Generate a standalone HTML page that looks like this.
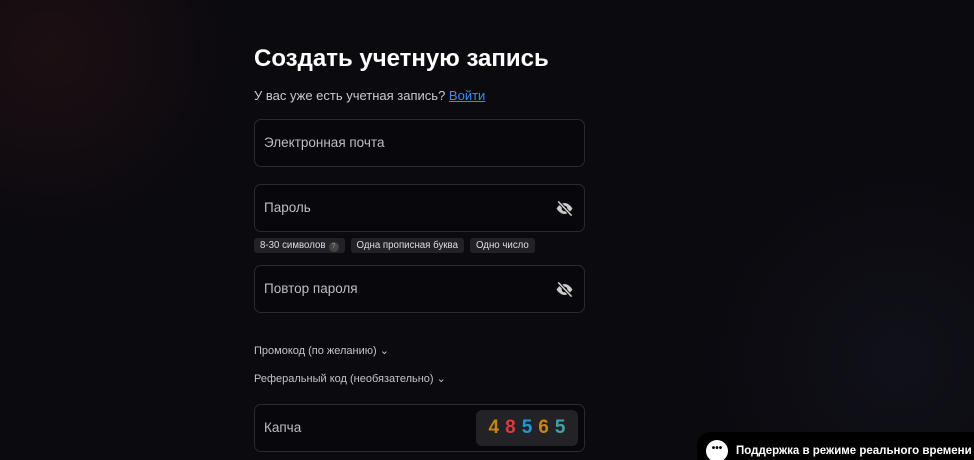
<!DOCTYPE html>
<html><head><meta charset="utf-8"><style>
*{margin:0;padding:0;box-sizing:border-box}
html,body{width:974px;height:460px;overflow:hidden}
body{background:#0b0a0f;font-family:"Liberation Sans",sans-serif;color:#fff;position:relative}
.glow{position:absolute;left:-150px;top:-150px;width:400px;height:400px;background:radial-gradient(circle,rgba(80,30,30,.25),rgba(0,0,0,0) 65%)}
.glow2{position:absolute;right:-150px;bottom:-100px;width:450px;height:400px;background:radial-gradient(circle,rgba(40,45,70,.18),rgba(0,0,0,0) 65%)}
h1{position:absolute;left:254px;top:45px;font-size:24px;font-weight:bold}
.sub{position:absolute;left:254px;top:88px;font-size:13px;color:#c9c9cf}
.sub a{color:#3b8cf0;text-decoration:underline}
.inp{position:absolute;left:254px;width:331px;height:48px;border:1px solid #2b2a31;border-radius:7px;background:#08070b;font-size:13.5px;color:#bdbdc3;padding:0 0 0 9px;line-height:46px}
.eye{position:absolute;right:10px;top:14px}
.tags{position:absolute;left:254px;top:238px;display:flex;gap:6px}
.tag{background:#222127;border-radius:3px;font-size:9.7px;color:#ddd;padding:0 6px;height:15px;line-height:15px}
.q{display:inline-block;width:10px;height:10px;border-radius:50%;background:#444;color:#999;font-size:7px;text-align:center;line-height:10px;margin-left:3px}
.lnk{position:absolute;left:254px;font-size:11px;color:#c3c3c9}
.cap{position:absolute;right:6px;top:5px;width:102px;height:36px;background:#232227;border-radius:6px;font-weight:bold;font-size:19px;line-height:36px;text-align:center;letter-spacing:6px;padding-left:6px}
.chat{position:absolute;left:697px;top:432px;width:277px;height:28px;background:#000;border-radius:14px 0 0 0;font-size:11.5px;font-weight:bold;line-height:38px;padding-left:39px;white-space:nowrap;overflow:hidden}
.bub{position:absolute;left:9px;top:8px;width:22px;height:22px;border-radius:50%;background:#fff;color:#000;font-size:10px;line-height:18px;text-align:center}
</style></head><body>
<div class="glow"></div><div class="glow2"></div>
<h1>Создать учетную запись</h1>
<div class="sub">У вас уже есть учетная запись? <a>Войти</a></div>
<div class="inp" style="top:119px">Электронная почта</div>
<div class="inp" style="top:184px">Пароль<svg class="eye" width="19" height="19" viewBox="0 0 24 24"><path d="M2 12s4-7 10-7 10 7 10 7-4 7-10 7S2 12 2 12z" fill="#ccc"/><circle cx="12" cy="12" r="3.5" fill="#08070b"/><path d="M4 3l17 18" stroke="#08070b" stroke-width="4"/><path d="M4 3l17 18" stroke="#ccc" stroke-width="2"/></svg></div>
<div class="tags"><div class="tag">8-30 символов<span class="q">?</span></div><div class="tag">Одна прописная буква</div><div class="tag">Одно число</div></div>
<div class="inp" style="top:265px">Повтор пароля<svg class="eye" width="19" height="19" viewBox="0 0 24 24"><path d="M2 12s4-7 10-7 10 7 10 7-4 7-10 7S2 12 2 12z" fill="#ccc"/><circle cx="12" cy="12" r="3.5" fill="#08070b"/><path d="M4 3l17 18" stroke="#08070b" stroke-width="4"/><path d="M4 3l17 18" stroke="#ccc" stroke-width="2"/></svg></div>
<div class="lnk" style="top:344px">Промокод (по желанию) ⌄</div>
<div class="lnk" style="top:372px">Реферальный код (необязательно) ⌄</div>
<div class="inp" style="top:404px;height:48px">Капча<div class="cap"><span style="color:#c9860e">4</span><span style="color:#e0383e">8</span><span style="color:#1b9ad6">5</span><span style="color:#c9860e">6</span><span style="color:#3aa6a6">5</span></div></div>
<div class="chat"><div class="bub">•••</div>Поддержка в режиме реального времени</div>
</body></html>
